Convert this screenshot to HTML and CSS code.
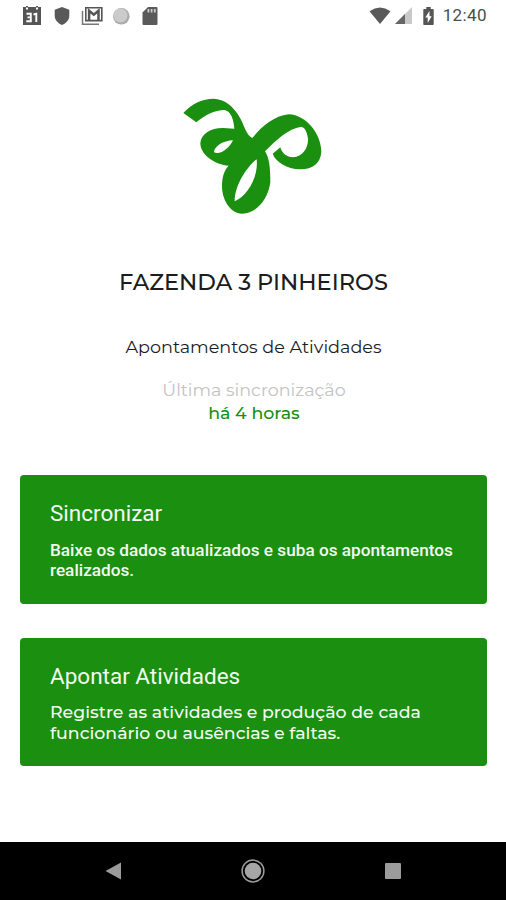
FILE: index.html
```html
<!DOCTYPE html>
<html lang="pt-BR">
  <head>
    <meta charset="UTF-8" />
    <meta name="viewport" content="width=device-width, initial-scale=1.0" />
    <title>Fazenda 3 Pinheiros</title>
    <link rel="stylesheet" href="styles.css">
  </head>
  <body>
    <header class="status-bar">
      <div class="status-left">
        <!-- calendar -->
        <svg width="20" height="22" viewBox="0 0 20 22">
          <path fill="#555" d="M1 2h3V1h2v1h8V1h2v1h3v18H1z"/>
          <path fill="#fff" d="M4 2.500h2v2H4zM14 2.500h2v2h-2z"/>
          <path fill="none" stroke="#fff" stroke-width="1.900" d="M4.500 8.700h4.300v7.600H4.300M5.500 12.400h3M11.500 9.500l2.800-.8V17"/>
        </svg>
        <!-- shield -->
        <svg width="16" height="20" viewBox="0 0 16 20">
          <path fill="#595959" d="M8 1l7.300 2.700v6c0 4-3 7.500-7.300 9.300C3.700 17.200.7 13.700.7 9.700v-6z"/>
        </svg>
        <!-- mail -->
        <svg width="22" height="20" viewBox="0 0 22 20">
          <path fill="none" stroke="#777" stroke-width="1.500" d="M1.500 5v13.200H18"/>
          <path fill="#fff" stroke="#555" stroke-width="1.600" d="M4.800 1.800h16v12.800h-16z"/>
          <path fill="none" stroke="#555" stroke-width="2.500" d="M8.100 14V4.700l4.700 4 4.700-4V14"/>
        </svg>
        <!-- sync circle -->
        <svg class="circle" width="18" height="18" viewBox="0 0 18 18">
          <circle cx="9.300" cy="9.300" r="8.300" fill="#aaa"/>
          <circle cx="8.500" cy="8.500" r="7" fill="#cbcbcb"/>
        </svg>
        <!-- sd card -->
        <svg width="16" height="20" viewBox="0 0 16 20">
          <path fill="#5a5a5a" d="M6 1h8.500q1 0 1 1v16q0 1-1 1h-13q-1 0-1-1V6.500z"/>
          <path fill="#ccc" d="M5.500 3h1.800v3.500H5.500zM8.700 3h1.800v3.500H8.700zM11.900 3h1.800v3.500h-1.800z"/>
        </svg>
      </div>
      <div class="status-right">
        <svg class="wifi" width="22" height="18" viewBox="0 0 22 18">
          <path fill="#595959" d="M.5 4.200Q11-3.200 21.500 4.200L11 17z"/>
        </svg>
        <svg class="signal" width="17" height="17" viewBox="0 0 17 17">
          <path fill="#c9c9c9" d="M0 17L17 0v17z"/>
          <path fill="#666" d="M0 17l10-10v10z"/>
        </svg>
        <svg class="battery" width="11" height="18" viewBox="0 0 11 18">
          <path fill="#555" d="M3.300 0h4.400v2H10q.7 0 .7.700v14.500q0 .8-.7.800H1q-.7 0-.7-.8V2.700Q.3 2 1 2h2.300z"/>
          <path fill="#fff" d="M6.500 4L2.300 10.500h2.400V16l4-6.800H6.500z"/>
        </svg>
        <span class="clock">12:40</span>
      </div>
    </header>

    <main>
      <svg class="logo" width="160" height="130" viewBox="0 0 480 390">
        <path fill="#1a8f10" fill-rule="evenodd" d="M31 69C57 40 90 26 121 26C155 27 181 49 199 80C215 107 218 133 238 144C260 116 302 77 347 73C401 74 445 135 445 185C443 218 420 238 382 238C341 236 309 217 299 191L322 172C327 190 341 201 360 202C389 199 406 174 405 147C403 129 397 112 384 110C346 116 309 150 276 184C288 202 292 230 292 277C286 326 252 370 208 371C171 369 148 330 147 290C147 262 153 241 167 227C127 225 82 195 82 159C84 130 116 113 151 114L184 116C182 88 174 63 154 60C125 60 95 76 70 97ZM180 151C151 152 123 169 123 187C142 196 169 175 180 151ZM251 208C226 226 185 283 185 334C219 321 257 265 251 208Z"/>
      </svg>
      <h1>FAZENDA 3 PINHEIROS</h1>
      <h2>Apontamentos de Atividades</h2>
      <p class="sync-label">Última sincronização</p>
      <p class="sync-time">há 4 horas</p>

      <div class="cards">
        <div class="card">
          <div class="card-title">Sincronizar</div>
          <div class="card-text roboto">Baixe os dados atualizados e suba os apontamentos<br>realizados.</div>
        </div>
        <div class="card">
          <div class="card-title">Apontar Atividades</div>
          <div class="card-text wide">Registre as atividades e produção de cada<br>funcionário ou ausências e faltas.</div>
        </div>
      </div>
    </main>

    <nav class="nav-bar">
      <svg width="20" height="20" viewBox="0 0 20 20">
        <path fill="#9b9b9b" d="M2.500 10L18 1.500v17z"/>
      </svg>
      <svg width="26" height="26" viewBox="0 0 26 26">
        <circle cx="13" cy="13" r="10.900" fill="none" stroke="#9b9b9b" stroke-width="1.500"/>
        <circle cx="13" cy="13" r="8.300" fill="#a6a6a6"/>
      </svg>
      <svg width="20" height="20" viewBox="0 0 20 20">
        <rect x="2" y="2" width="16" height="16" rx="1" fill="#9b9b9b"/>
      </svg>
    </nav>
  </body>
</html>
```
FILE: styles.css
```css
:root {
  --green: #1a8f10;
}
* {
  box-sizing: border-box;
}
body {
  margin: 0;
  height: 900px;
  display: flex;
  flex-direction: column;
  background-color: #fff;
  font-family: Montserrat, Inter, sans-serif;
  color: #1c1c1c;
}
svg {
  display: block;
}
.status-bar {
  height: 31px;
  padding: 0 19px 0 22px;
  display: flex;
  justify-content: space-between;
  align-items: center;
}
.status-left {
  display: flex;
  align-items: center;
  gap: 11.5px;
}
.circle {
  margin: 0 1px 0 -3px;
}
.status-right {
  display: flex;
  align-items: center;
}
.wifi {
  margin-right: 4px;
}
.battery {
  margin-left: 11px;
}
.clock {
  margin-left: 9px;
  font-family: Roboto, sans-serif;
  font-size: 17px;
  letter-spacing: 0.4px;
  line-height: 31px;
  color: #4c4c4c;
}
main {
  flex: 1;
  display: flex;
  flex-direction: column;
  align-items: center;
}
.logo {
  margin-top: 59px;
}
h1,
h2,
p {
  margin: 0;
  text-align: center;
  white-space: nowrap;
}
h1 {
  margin-top: 47px;
  padding-left: 1px;
  font-size: 22.5px;
  font-weight: 500;
  line-height: 30px;
}
h2 {
  margin-top: 38px;
  padding-left: 1px;
  font-size: 17.6px;
  font-weight: 400;
  line-height: 24px;
}
.sync-label {
  margin-top: 19px;
  padding-left: 2px;
  font-size: 17.5px;
  line-height: 23px;
  color: #c3c3c3;
}
.sync-time {
  padding-left: 2px;
  font-size: 17.4px;
  font-weight: 500;
  line-height: 23px;
  color: var(--green);
}
.cards {
  width: 100%;
  margin-top: 51px;
  padding: 0 19px 0 20px;
  display: flex;
  flex-direction: column;
  gap: 34px;
}
.card {
  height: 128.5px;
  padding: 23px 30px 0;
  border-radius: 4px;
  background-color: var(--green);
  color: #f2faf1;
  white-space: nowrap;
}
.card-title {
  font-family: Roboto, sans-serif;
  font-size: 22.5px;
  line-height: 30px;
}
.card-text {
  margin-top: 12px;
  font-size: 17.35px;
  line-height: 20px;
}
.roboto {
  font-family: Roboto, sans-serif;
  font-size: 17.2px;
  font-weight: 500;
}
.wide {
  margin-top: 10px;
  font-weight: 500;
  line-height: 21px;
}
.nav-bar {
  height: 58px;
  padding: 0 103px;
  display: flex;
  justify-content: space-between;
  align-items: center;
  background-color: #000;
}
```
